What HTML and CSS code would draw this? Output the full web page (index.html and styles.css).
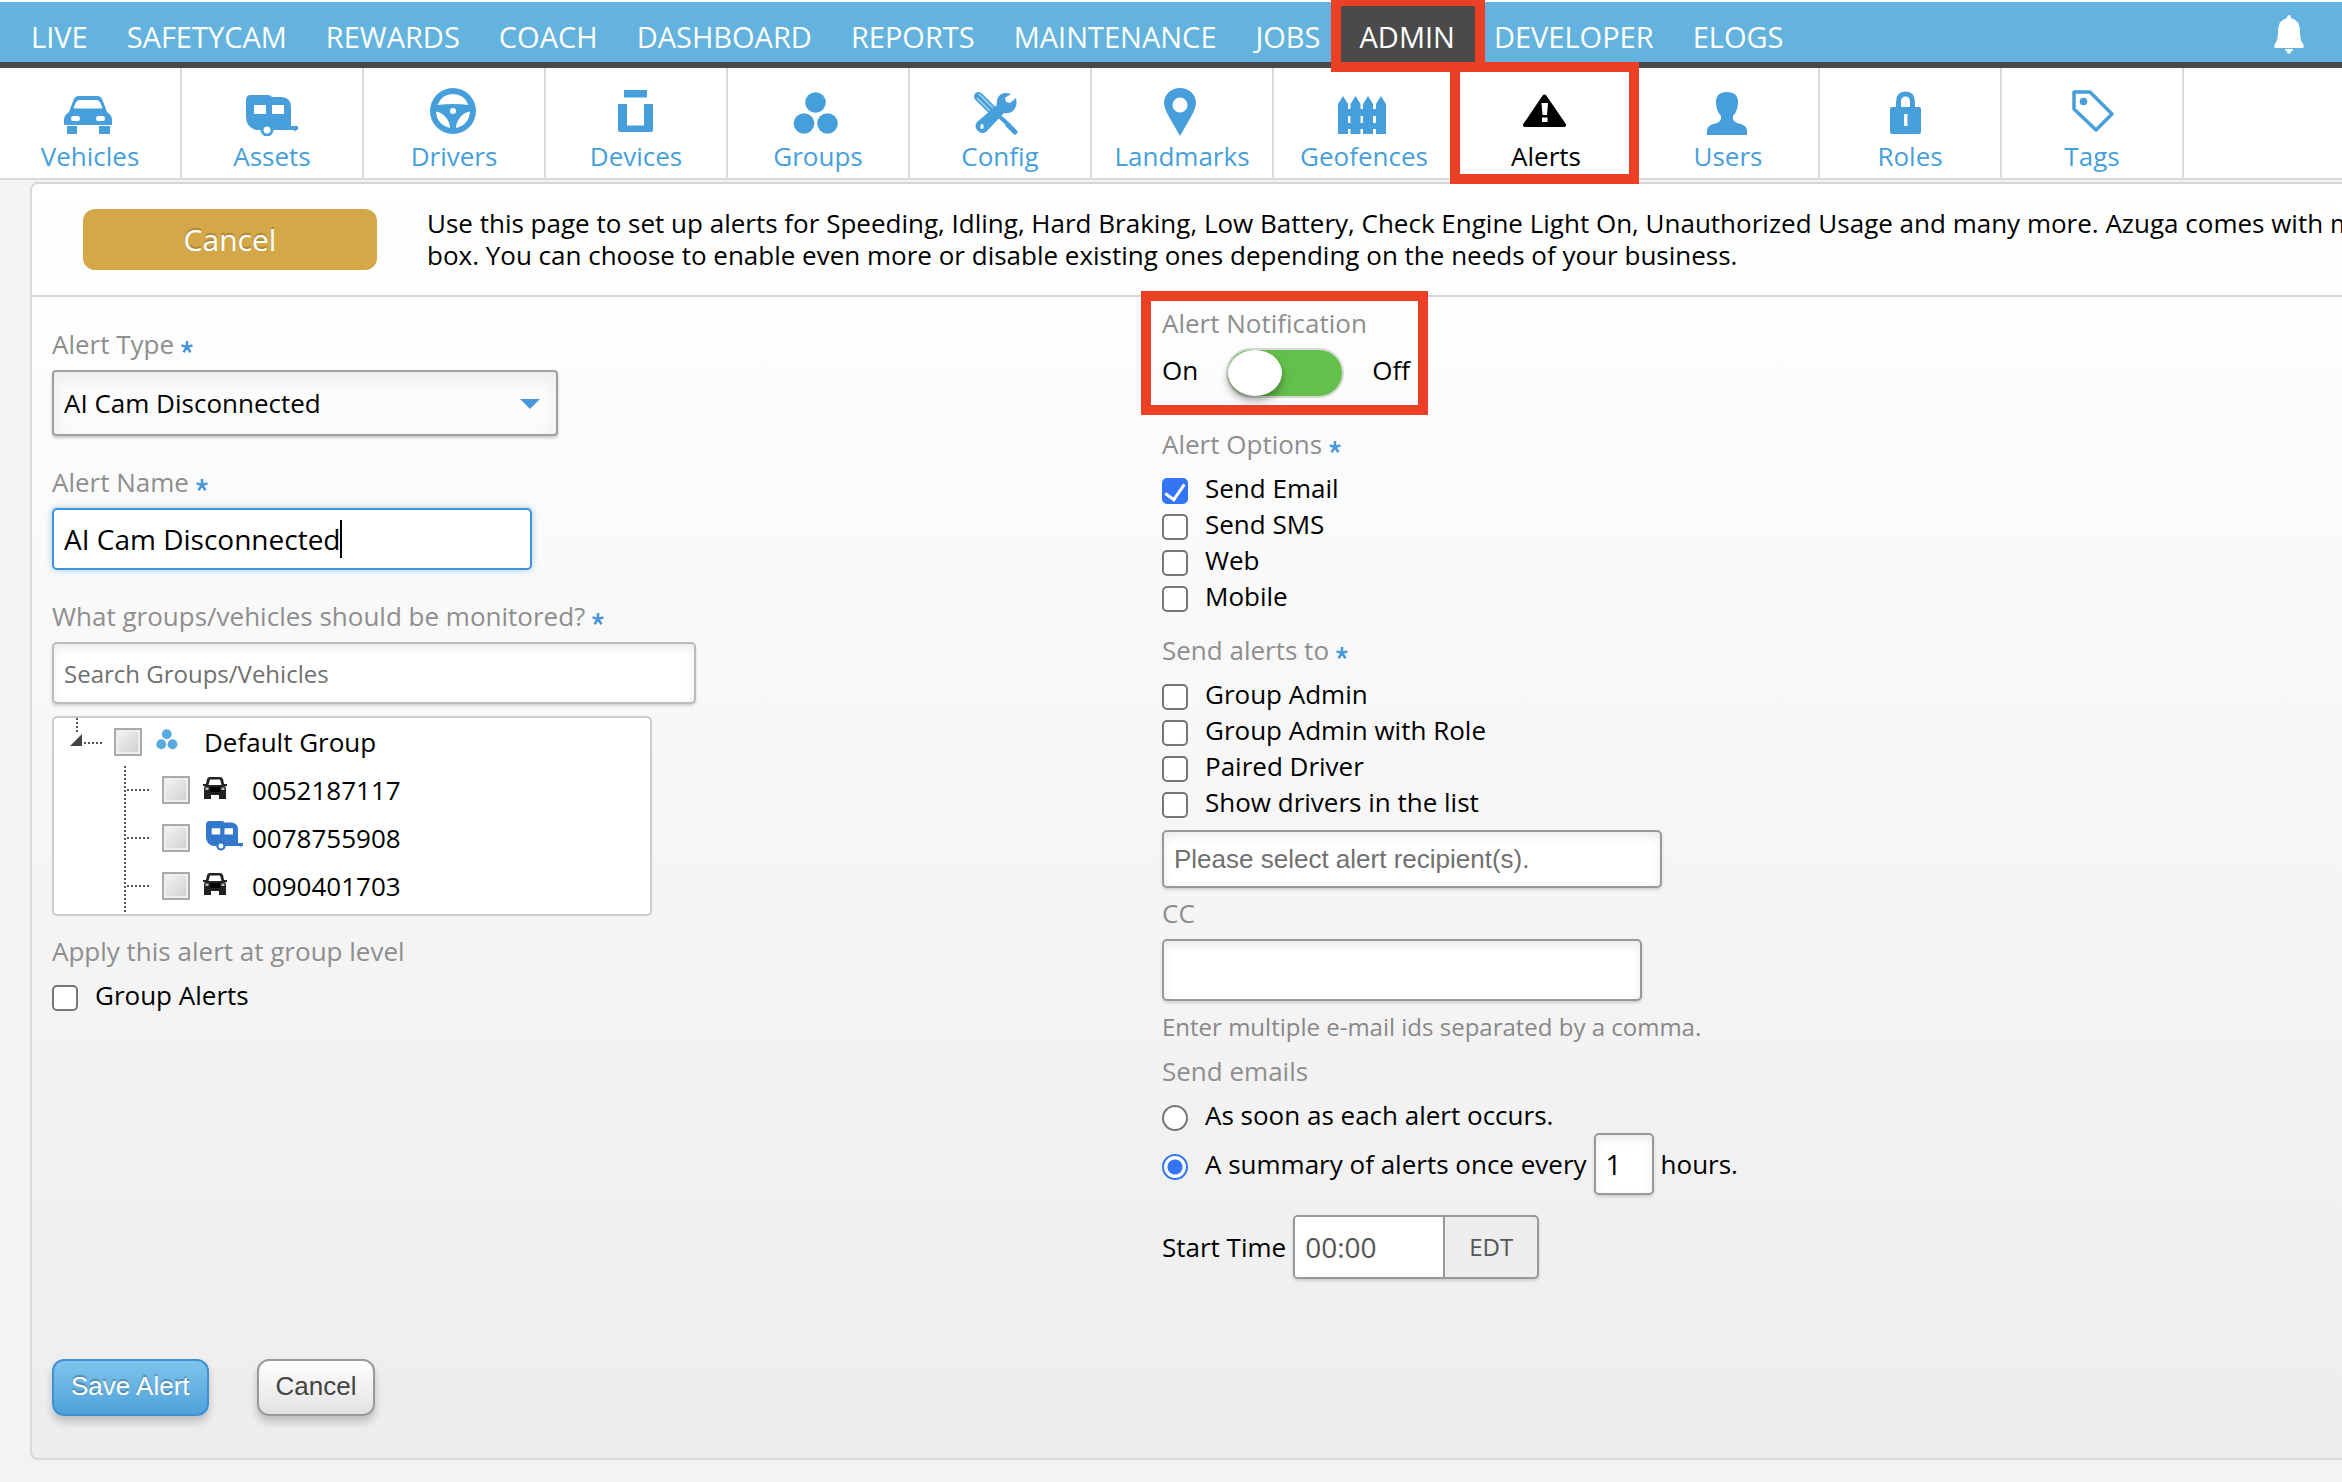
FILE: index.html
```html
<!DOCTYPE html>
<html lang="en">
<head>
  <meta charset="UTF-8" />
  <meta name="viewport" content="width=device-width, initial-scale=1.0"/>
  <title>Admin - Alerts</title>
  <link rel="stylesheet" href="styles.css">
</head>
<body>

  <!-- shared shapes -->
  <svg class="sprite" aria-hidden="true">
    <symbol id="star" viewBox="0 0 12 12">
      <path d="M6 6V0M6 6L0.500 4.400M6 6l5.500-1.600M6 6l-3.500 5.300M6 6l3.500 5.300" fill="none" stroke="currentColor" stroke-width="2.500"/>
    </symbol>
    <symbol id="car" viewBox="0 0 48 40">
      <path fill="currentColor" fill-rule="evenodd" d="M15 0h18q4 0 5.500 4l4.500 12q5 3 5 8v5h-48v-5q0-5 5-8L9.500 4Q11 0 15 0zM13 5q-2 2-3.500 7.500h29Q37 7 35 5q-1-1-3-1H16q-2 0-3 1zM9 20h5q2 0 2 2.500T14 25H9q-2 0-2-2.500T9 20zm25 0h5q2 0 2 2.500T39 25h-5q-2 0-2-2.500t2-2.500zM3 30h10v7q0 1-1 1H4q-1 0-1-1zm32 0h11v7q0 1-1 1h-9q-1 0-1-1z"/>
    </symbol>
    <symbol id="small-car" viewBox="0 0 26 24">
      <path fill="#222" fill-rule="evenodd" d="M8 1h10q2 0 3 2l1 5h3v2h-2q1 1 1 3v6H2v-6q0-2 1-3H1V8h3l1-5q1-2 3-2zM8 3.500L6.500 9h13L18 3.500z"/>
      <path fill="#000" d="M8 11h10v5H8z"/>
      <path fill="#bbb" d="M3.500 11.500h3V14h-3zM19.500 11.500h3V14h-3z"/>
      <path fill="#222" d="M2 18h7v5H2zM17 18h7v5h-7z"/>
    </symbol>
    <symbol id="trailer" viewBox="0 0 52 42">
      <path fill="currentColor" fill-rule="evenodd" d="M5 0h17q3 0 4 2h10q9 1 9 10v19h7v4h-2l-1 2-1-2H10Q0 32 0 22V5q0-5 5-5zM8 10v9h12v-9zm18 0v9h12v-9z"/>
      <circle cx="21" cy="35" r="5" fill="#fff" stroke="currentColor" stroke-width="3"/>
    </symbol>
    <symbol id="groups" viewBox="0 0 46 43">
      <g fill="currentColor"><circle cx="22.500" cy="10.500" r="10.300"/><circle cx="11" cy="31.500" r="10.300"/><circle cx="34.500" cy="31.500" r="10.300"/></g>
    </symbol>
  </svg>

  <header class="topbar">
    <nav class="main-nav">
      <a href="#">LIVE</a>
      <a href="#">SAFETYCAM</a>
      <a href="#">REWARDS</a>
      <a href="#">COACH</a>
      <a href="#">DASHBOARD</a>
      <a href="#">REPORTS</a>
      <a href="#">MAINTENANCE</a>
      <a href="#">JOBS</a>
      <a href="#" class="active">ADMIN<span class="marker marker-admin"></span></a>
      <a href="#">DEVELOPER</a>
      <a href="#">ELOGS</a>
    </nav>
    <button type="button" class="bell" aria-label="Notifications">
      <svg width="30" height="40" viewBox="0 0 30 40"><path fill="#fff" d="M13.500 1q1.500-2 3 0l.5 2q9 2 9 14 0 9 3.500 12.500V33h-29v-3.500Q4 26 4 17 4 5 13 3zM11 34h8q0 2-2 2.500l-.5 2h-3l-.5-2q-2-.5-2-2.500z"/></svg>
    </button>
  </header>

  <nav class="sub-nav">
    <a href="#">
      <svg class="tab-icon" viewBox="0 0 52 50"><use href="#car" x="0" y="10" width="48" height="40"/></svg>
      Vehicles
    </a>
    <a href="#">
      <svg class="tab-icon" viewBox="0 0 52 50"><use href="#trailer" x="0" y="9" width="52" height="42"/></svg>
      Assets
    </a>
    <a href="#">
      <svg class="tab-icon" viewBox="0 0 52 50"><path fill="currentColor" fill-rule="evenodd" d="M25 2a23 23 0 1 0 0 46 23 23 0 1 0 0-46zM9.500 19Q14 8 25 8t15.500 11q-15-2-31 0zM25 22a3 3 0 1 0 0 6 3 3 0 1 0 0-6zM8 25.500q6 1 10 6t4 10.500Q9 39 8 25.500zM42 25.500q-6 1-10 6T28 42q13-3 14-16.500z"/></svg>
      Drivers
    </a>
    <a href="#">
      <svg class="tab-icon" viewBox="0 0 52 50"><path fill="currentColor" d="M14 4h23v7.500H14zM8 18h9v21.500h17V18h9v26q0 2-2 2H10q-2 0-2-2z"/></svg>
      Devices
    </a>
    <a href="#">
      <svg class="tab-icon" viewBox="0 0 52 50"><use href="#groups" x="1" y="6" width="46" height="43"/></svg>
      Groups
    </a>
    <a href="#">
      <svg class="tab-icon" viewBox="0 0 52 50">
        <path d="M4.500 10.500L18 24" stroke="currentColor" stroke-width="9" stroke-linecap="round"/>
        <path d="M5 8l14 14M3 12l13 13" stroke="#a5d6f0" stroke-width="1.500"/>
        <path d="M26 31l10 9" stroke="currentColor" stroke-width="4"/>
        <path d="M34 39l7 7" stroke="currentColor" stroke-width="5" stroke-linecap="round"/>
        <path fill="currentColor" d="M37 8q-8-3-12 2-3 4-2 9L3 36q-3 4 0 8 4 5 9 2l18-19q5 1 9-2 5-5 3-13l-6 5-4-1-1-4z"/>
        <rect x="6.500" y="38" width="3" height="5" rx="1.500" fill="#fff"/>
      </svg>
      Config
    </a>
    <a href="#">
      <svg class="tab-icon" viewBox="0 0 52 50"><path fill="currentColor" fill-rule="evenodd" d="M24 2q7 0 11.500 4.500T40 17q0 4-4 12L24 50 12 29q-4-8-4-12 0-6 4.500-10.500T24 2zm0 9.500a7.500 7.500 0 1 0 0 15 7.500 7.500 0 1 0 0-15z"/></svg>
      Landmarks
    </a>
    <a href="#">
      <svg class="tab-icon" viewBox="0 0 52 50"><path fill="currentColor" d="M0 48V18l5-8 5 8v30zM12.500 48V18l5-8 5 8v30zM25 48V18l5-8 5 8v30zM38 48V18l5-8 5 8v30zM2 23h44v7H2zM2 37h44v6H2z"/></svg>
      Geofences
    </a>
    <a href="#" class="active">
      <svg class="tab-icon" viewBox="0 0 52 50"><path fill="currentColor" stroke="currentColor" stroke-width="4" stroke-linejoin="round" d="M24.500 10.500L44 39H5z"/><path fill="#fff" d="M21.500 17h6.500l-1 12h-4.500zM22 31.500h5.500V36H22z"/></svg>
      Alerts
      <span class="marker marker-alerts"></span>
    </a>
    <a href="#">
      <svg class="tab-icon" viewBox="0 0 52 50"><path fill="currentColor" d="M25 6q11 0 11 10 0 9-5 14v3q1 4 8 5 6 2 6 7v4H5v-4q0-5 6-7 7-1 8-5v-3q-5-5-5-14Q14 6 25 6z"/></svg>
      Users
    </a>
    <a href="#">
      <svg class="tab-icon" viewBox="0 0 52 50"><path fill="none" stroke="currentColor" stroke-width="5" d="M14.500 21v-5q0-8 7-8t7 8v5"/><path fill="currentColor" fill-rule="evenodd" d="M8 21h27q2 0 2 2v23q0 2-2 2H8q-2 0-2-2V23q0-2 2-2zm12 7v12h3.500V28z"/></svg>
      Roles
    </a>
    <a href="#">
      <svg class="tab-icon" viewBox="0 0 52 50"><path fill="none" stroke="currentColor" stroke-width="3.500" stroke-linejoin="round" d="M8 6h16l22 22-16 16L8 23z"/><circle cx="17.500" cy="15.500" r="3.800" fill="currentColor"/></svg>
      Tags
    </a>
  </nav>

  <main class="panel">
    <div class="panel-head">
      <button type="button" class="btn-gold">Cancel</button>
      <p class="intro">
        Use this page to set up alerts for Speeding, Idling, Hard Braking, Low Battery, Check Engine Light On, Unauthorized Usage and many more. Azuga comes with m<br>
        box. You can choose to enable even more or disable existing ones depending on the needs of your business.
      </p>
    </div>

    <form class="alert-form">
      <div class="columns">

        <!-- Alert definition -->
        <div class="col col-left">
          <div class="field">
            <label for="alertType">Alert Type<svg class="req"><use href="#star"/></svg></label>
            <div class="select-wrap">
              <select id="alertType">
                <option>AI Cam Disconnected</option>
              </select>
              <svg class="arrow" viewBox="0 0 20 10"><path d="M0 0h20L10 10z" fill="#4a98dc"/></svg>
            </div>
          </div>

          <div class="field">
            <label for="alertName">Alert Name<svg class="req"><use href="#star"/></svg></label>
            <div class="input-wrap">
              <input type="text" id="alertName" class="text-input focused" value="AI Cam Disconnected">
              <span class="caret"></span>
            </div>
          </div>

          <div class="field">
            <label for="search">What groups/vehicles should be monitored?<svg class="req"><use href="#star"/></svg></label>
            <input type="text" id="search" class="text-input search" placeholder="Search Groups/Vehicles">
            <ul class="tree">
              <li>
                <svg class="branch" viewBox="0 0 60 48"><path class="dots" d="M23 0v16M30 25h18"/><path d="M16 28h12V16z" fill="#444"/></svg>
                <input type="checkbox" id="g0" class="tree-check">
                <svg class="tree-icon group-icon" viewBox="0 0 62 48"><use href="#groups" x="14" y="11" width="22" height="21"/></svg>
                <label for="g0">Default Group</label>
              </li>
              <li class="child">
                <svg class="branch" viewBox="0 0 60 48"><path class="dots" d="M23 0v48M25 24h23"/></svg>
                <input type="checkbox" id="v1" class="tree-check">
                <svg class="tree-icon" viewBox="0 0 62 48"><use href="#small-car" x="12" y="10" width="26" height="24"/></svg>
                <label for="v1">0052187117</label>
              </li>
              <li class="child">
                <svg class="branch" viewBox="0 0 60 48"><path class="dots" d="M23 0v48M25 24h23"/></svg>
                <input type="checkbox" id="v2" class="tree-check">
                <svg class="tree-icon trailer-icon" viewBox="0 0 62 48"><use href="#trailer" x="16" y="7" width="37" height="30"/></svg>
                <label for="v2">0078755908</label>
              </li>
              <li class="child">
                <svg class="branch" viewBox="0 0 60 48"><path class="dots" d="M23 0v52M25 24h23"/></svg>
                <input type="checkbox" id="v3" class="tree-check">
                <svg class="tree-icon" viewBox="0 0 62 48"><use href="#small-car" x="12" y="10" width="26" height="24"/></svg>
                <label for="v3">0090401703</label>
              </li>
            </ul>
          </div>

          <div class="group-level">
            <h3>Apply this alert at group level</h3>
            <label class="option"><input type="checkbox">Group Alerts</label>
          </div>
        </div>

        <!-- Notification settings -->
        <div class="col col-right">
          <section class="notification">
            <h3>Alert Notification</h3>
            <div class="toggle-row">
              <span>On</span>
              <input type="checkbox" class="toggle" aria-label="Alert Notification" checked>
              <span>Off</span>
            </div>
            <span class="marker marker-notification"></span>
          </section>

          <section class="group">
            <h3>Alert Options<svg class="req"><use href="#star"/></svg></h3>
            <label class="option"><input type="checkbox" checked>Send Email</label>
            <label class="option"><input type="checkbox">Send SMS</label>
            <label class="option"><input type="checkbox">Web</label>
            <label class="option"><input type="checkbox">Mobile</label>
          </section>

          <section class="group">
            <h3>Send alerts to<svg class="req"><use href="#star"/></svg></h3>
            <label class="option"><input type="checkbox">Group Admin</label>
            <label class="option"><input type="checkbox">Group Admin with Role</label>
            <label class="option"><input type="checkbox">Paired Driver</label>
            <label class="option"><input type="checkbox">Show drivers in the list</label>
            <input type="text" class="text-input recipients" aria-label="Alert recipients" placeholder="Please select alert recipient(s).">
          </section>

          <div class="cc">
            <label for="cc">CC</label>
            <input type="text" id="cc" class="text-input">
            <p class="hint">Enter multiple e-mail ids separated by a comma.</p>
          </div>

          <section class="emails">
            <h3>Send emails</h3>
            <label class="option"><input type="radio" name="freq">As soon as each alert occurs.</label>
            <div class="summary-row">
              <label class="option"><input type="radio" name="freq" checked>A summary of alerts once every</label>
              <input type="text" id="hours" class="text-input hours" value="1">
              <label for="hours" class="plain">hours.</label>
            </div>
          </section>

          <div class="start-row">
            <label for="startTime" class="plain">Start Time</label>
            <div class="time-group">
              <input type="text" id="startTime" value="00:00">
              <span>EDT</span>
            </div>
          </div>
        </div>
      </div>

      <div class="form-actions">
        <button type="submit" class="btn btn-blue">Save Alert</button>
        <button type="button" class="btn">Cancel</button>
      </div>
    </form>
  </main>

</body>
</html>
```

FILE: styles.css
```css
* {
  box-sizing: border-box;
}

body {
  margin: 0;
  background: #f3f3f3;
  color: #000;
  font-family: 'Open Sans', sans-serif;
  font-size: 26px;
  line-height: 32px;
  overflow-x: hidden;
}

input,
select,
button {
  font-family: inherit;
  color: inherit;
  margin: 0;
}

a {
  text-decoration: none;
}

.sprite {
  position: absolute;
  width: 0;
  height: 0;
}

/* top navigation */
.topbar {
  display: flex;
  justify-content: space-between;
  border-top: 2px solid #fff;
  border-bottom: 6px solid #4a4a4a;
  background: #63b3de;
  padding: 0 34px 0 12px;
}

.main-nav {
  display: flex;
}

.main-nav a {
  position: relative;
  padding: 10px 20px 0 19px;
  font-size: 29px;
  line-height: 50px;
  color: #fff;
}

.main-nav .active {
  background: #4a4a4a;
}

.bell {
  border: none;
  background: none;
  padding: 0 4px;
}

.bell svg {
  display: block;
  margin-bottom: -6px;
}

/* red boxes around the parts to look at */
.marker {
  position: absolute;
  border: 10px solid #eb4026;
  z-index: 2;
  pointer-events: none;
}

.marker-admin {
  inset: -2px -10px -10px;
  border-top-width: 6px;
}

.marker-alerts {
  inset: -6px -3px -6px -6px;
}

.marker-notification {
  inset: -16px auto -17px -21px;
  width: 287px;
}

/* second level tabs */
.sub-nav {
  display: flex;
  background: #fff;
  border-bottom: 2px solid #dadada;
}

.sub-nav a {
  position: relative;
  display: flex;
  flex-direction: column;
  align-items: center;
  gap: 4px;
  width: 182px;
  padding: 18px 0 6px;
  border-right: 2px solid #dadada;
  color: #469fdb;
}

.sub-nav .active {
  color: #000;
}

.tab-icon {
  width: 52px;
  height: 50px;
}

/* panel */
.panel {
  margin: 2px -10px 20px 30px;
  border: 2px solid #d8d8d8;
  border-radius: 8px;
  background: linear-gradient(#fff, #ededed);
}

.panel-head {
  display: flex;
  align-items: center;
  gap: 50px;
  padding: 23px 0 24px 51px;
  border-bottom: 2px solid #d8d8d8;
}

.btn-gold {
  flex: none;
  width: 294px;
  border: none;
  border-radius: 12px;
  padding: 10px 0;
  background: #d4a848;
  color: #fff;
  font-size: 30px;
  line-height: 41px;
  text-shadow: 0 -2px 1px rgba(0, 0, 0, 0.2);
}

.intro {
  margin: 0;
  white-space: nowrap;
}

.alert-form {
  padding: 10px 20px 42px;
}

.columns {
  display: grid;
  grid-template-columns: 1110px 1fr;
}

.col {
  display: flex;
  flex-direction: column;
}

.col-left {
  gap: 30px;
  padding-top: 21px;
}

label,
h3 {
  display: block;
  margin: 0 0 10px;
  font-size: 26px;
  font-weight: 400;
  line-height: 32px;
  color: #8e8e8e;
}

.req {
  width: 12px;
  height: 12px;
  margin-left: 7px;
  vertical-align: 1px;
  color: #4a98dc;
}

.text-input {
  display: block;
  width: 480px;
  height: 62px;
  padding: 0 10px;
  border: 2px solid #999;
  border-radius: 5px;
  background: #fff;
  font-size: 28px;
  box-shadow: inset 0 4px 10px rgba(0, 0, 0, 0.08), 0 2px 3px rgba(0, 0, 0, 0.15);
}

.text-input::placeholder {
  color: #707070;
  opacity: 1;
}

.focused {
  border-color: #3f93d8;
  box-shadow: 0 0 6px rgba(90, 175, 230, 0.6);
}

.input-wrap,
.select-wrap {
  position: relative;
  width: max-content;
}

.caret {
  position: absolute;
  left: 288px;
  top: 12px;
  width: 2px;
  height: 38px;
  background: #000;
}

select {
  display: block;
  appearance: none;
  width: 506px;
  height: 66px;
  padding: 0 10px;
  border: 2px solid #a0a0a0;
  border-radius: 4px;
  background: #fcfcfc;
  font-size: 26px;
  box-shadow: inset 0 6px 20px rgba(0, 0, 0, 0.07), 0 2px 3px rgba(0, 0, 0, 0.2);
}

.arrow {
  position: absolute;
  right: 18px;
  top: 29px;
  width: 20px;
  height: 10px;
  pointer-events: none;
}

.search {
  width: 644px;
  border-color: #bbb;
  font-size: 24px;
}

/* vehicle tree */
.tree {
  list-style: none;
  width: 600px;
  height: 200px;
  margin: 12px 0 0;
  padding: 0;
  border: 2px solid #ccc;
  border-radius: 5px;
  background: #fff;
  overflow: hidden;
}

.tree li {
  display: flex;
  align-items: center;
  height: 48px;
}

.tree .child {
  padding-left: 48px;
}

.tree label {
  margin: 0;
  color: #000;
}

.branch {
  width: 60px;
  height: 48px;
  overflow: visible;
}

.dots {
  fill: none;
  stroke: #555;
  stroke-width: 2;
  stroke-dasharray: 2 2;
}

.tree-check {
  appearance: none;
  width: 28px;
  height: 28px;
  border: 2px solid #aaa;
  outline: 2px solid #eee;
  outline-offset: -4px;
  background: linear-gradient(135deg, #f4f4f4, #cfcfcf);
}

.tree-icon {
  width: 62px;
  height: 48px;
}

.group-icon {
  color: #58abdf;
}

.trailer-icon {
  color: #3278cc;
}

.group-level {
  margin-top: -11px;
}

/* check boxes and radios */
.option {
  display: flex;
  align-items: flex-start;
  gap: 17px;
  margin: 0;
  line-height: 36px;
  color: #000;
}

.option input {
  appearance: none;
  flex: none;
  width: 26px;
  height: 26px;
  margin-top: 8px;
  border: 2px solid #767676;
  border-radius: 5px;
  background: #fff;
}

.option input[type="checkbox"]:checked {
  display: grid;
  justify-content: center;
  align-content: start;
  border-color: #3375f6;
  background: #3375f6;
}

.option input[type="checkbox"]:checked::before {
  content: "";
  width: 9px;
  height: 17px;
  border: solid #fff;
  border-width: 0 3px 3px 0;
  transform: rotate(35deg);
}

.option input[type="radio"] {
  border-radius: 50%;
}

.option input[type="radio"]:checked {
  border-color: #3375f6;
  background: radial-gradient(circle, #3375f6 7px, #fff 8px);
}

/* right column */
.notification {
  position: relative;
  margin-bottom: 30px;
}

.notification h3 {
  margin-bottom: 9px;
}

.toggle-row {
  display: flex;
  line-height: 44px;
}

.toggle {
  appearance: none;
  width: 118px;
  height: 50px;
  margin: 0 28px;
  border: 2px solid #d8d8d8;
  border-radius: 25px;
  background: #63c04a;
}

.toggle::before {
  content: "";
  display: block;
  width: 54px;
  height: 46px;
  border-radius: 50%;
  background: #fff;
  box-shadow: 0 5px 8px rgba(0, 0, 0, 0.35);
}

.group {
  margin-bottom: 20px;
}

.recipients {
  width: 500px;
  height: 58px;
  margin: 10px 0 -11px;
  font-family: 'Liberation Sans', sans-serif;
  font-size: 26px;
}

.hint {
  margin: 10px 0 12px;
  font-size: 24px;
  line-height: 32px;
  color: #888;
}

.summary-row,
.start-row {
  display: flex;
  align-items: center;
  gap: 7px;
}

.hours {
  width: 60px;
}

.plain {
  margin: 0;
  color: #000;
}

.start-row {
  margin-top: 20px;
}

.time-group {
  display: flex;
  height: 64px;
  border: 2px solid #999;
  border-radius: 5px;
  background: #ededed;
  box-shadow: 0 2px 3px rgba(0, 0, 0, 0.15);
  overflow: hidden;
  color: #555;
}

.time-group input {
  width: 150px;
  padding: 0 10px;
  border: none;
  border-right: 2px solid #999;
  background: #fff;
  font-size: 28px;
}

.time-group span {
  width: 92px;
  font-size: 24px;
  line-height: 60px;
  text-align: center;
}

.form-actions {
  display: flex;
  gap: 48px;
  margin-top: 80px;
}

.btn {
  padding: 6px 17px 9px;
  border: 2px solid #999;
  border-radius: 12px;
  background: linear-gradient(#fff, #e2e2e2);
  color: #444;
  font-family: 'Liberation Sans', sans-serif;
  font-size: 26px;
  line-height: 38px;
  box-shadow: 0 6px 8px rgba(0, 0, 0, 0.2);
}

.btn-blue {
  border-color: #3f90d4;
  background: linear-gradient(#7fc4ec, #4fa1da);
  color: #fff;
  text-shadow: 0 -2px 1px rgba(0, 0, 0, 0.25);
}
```
